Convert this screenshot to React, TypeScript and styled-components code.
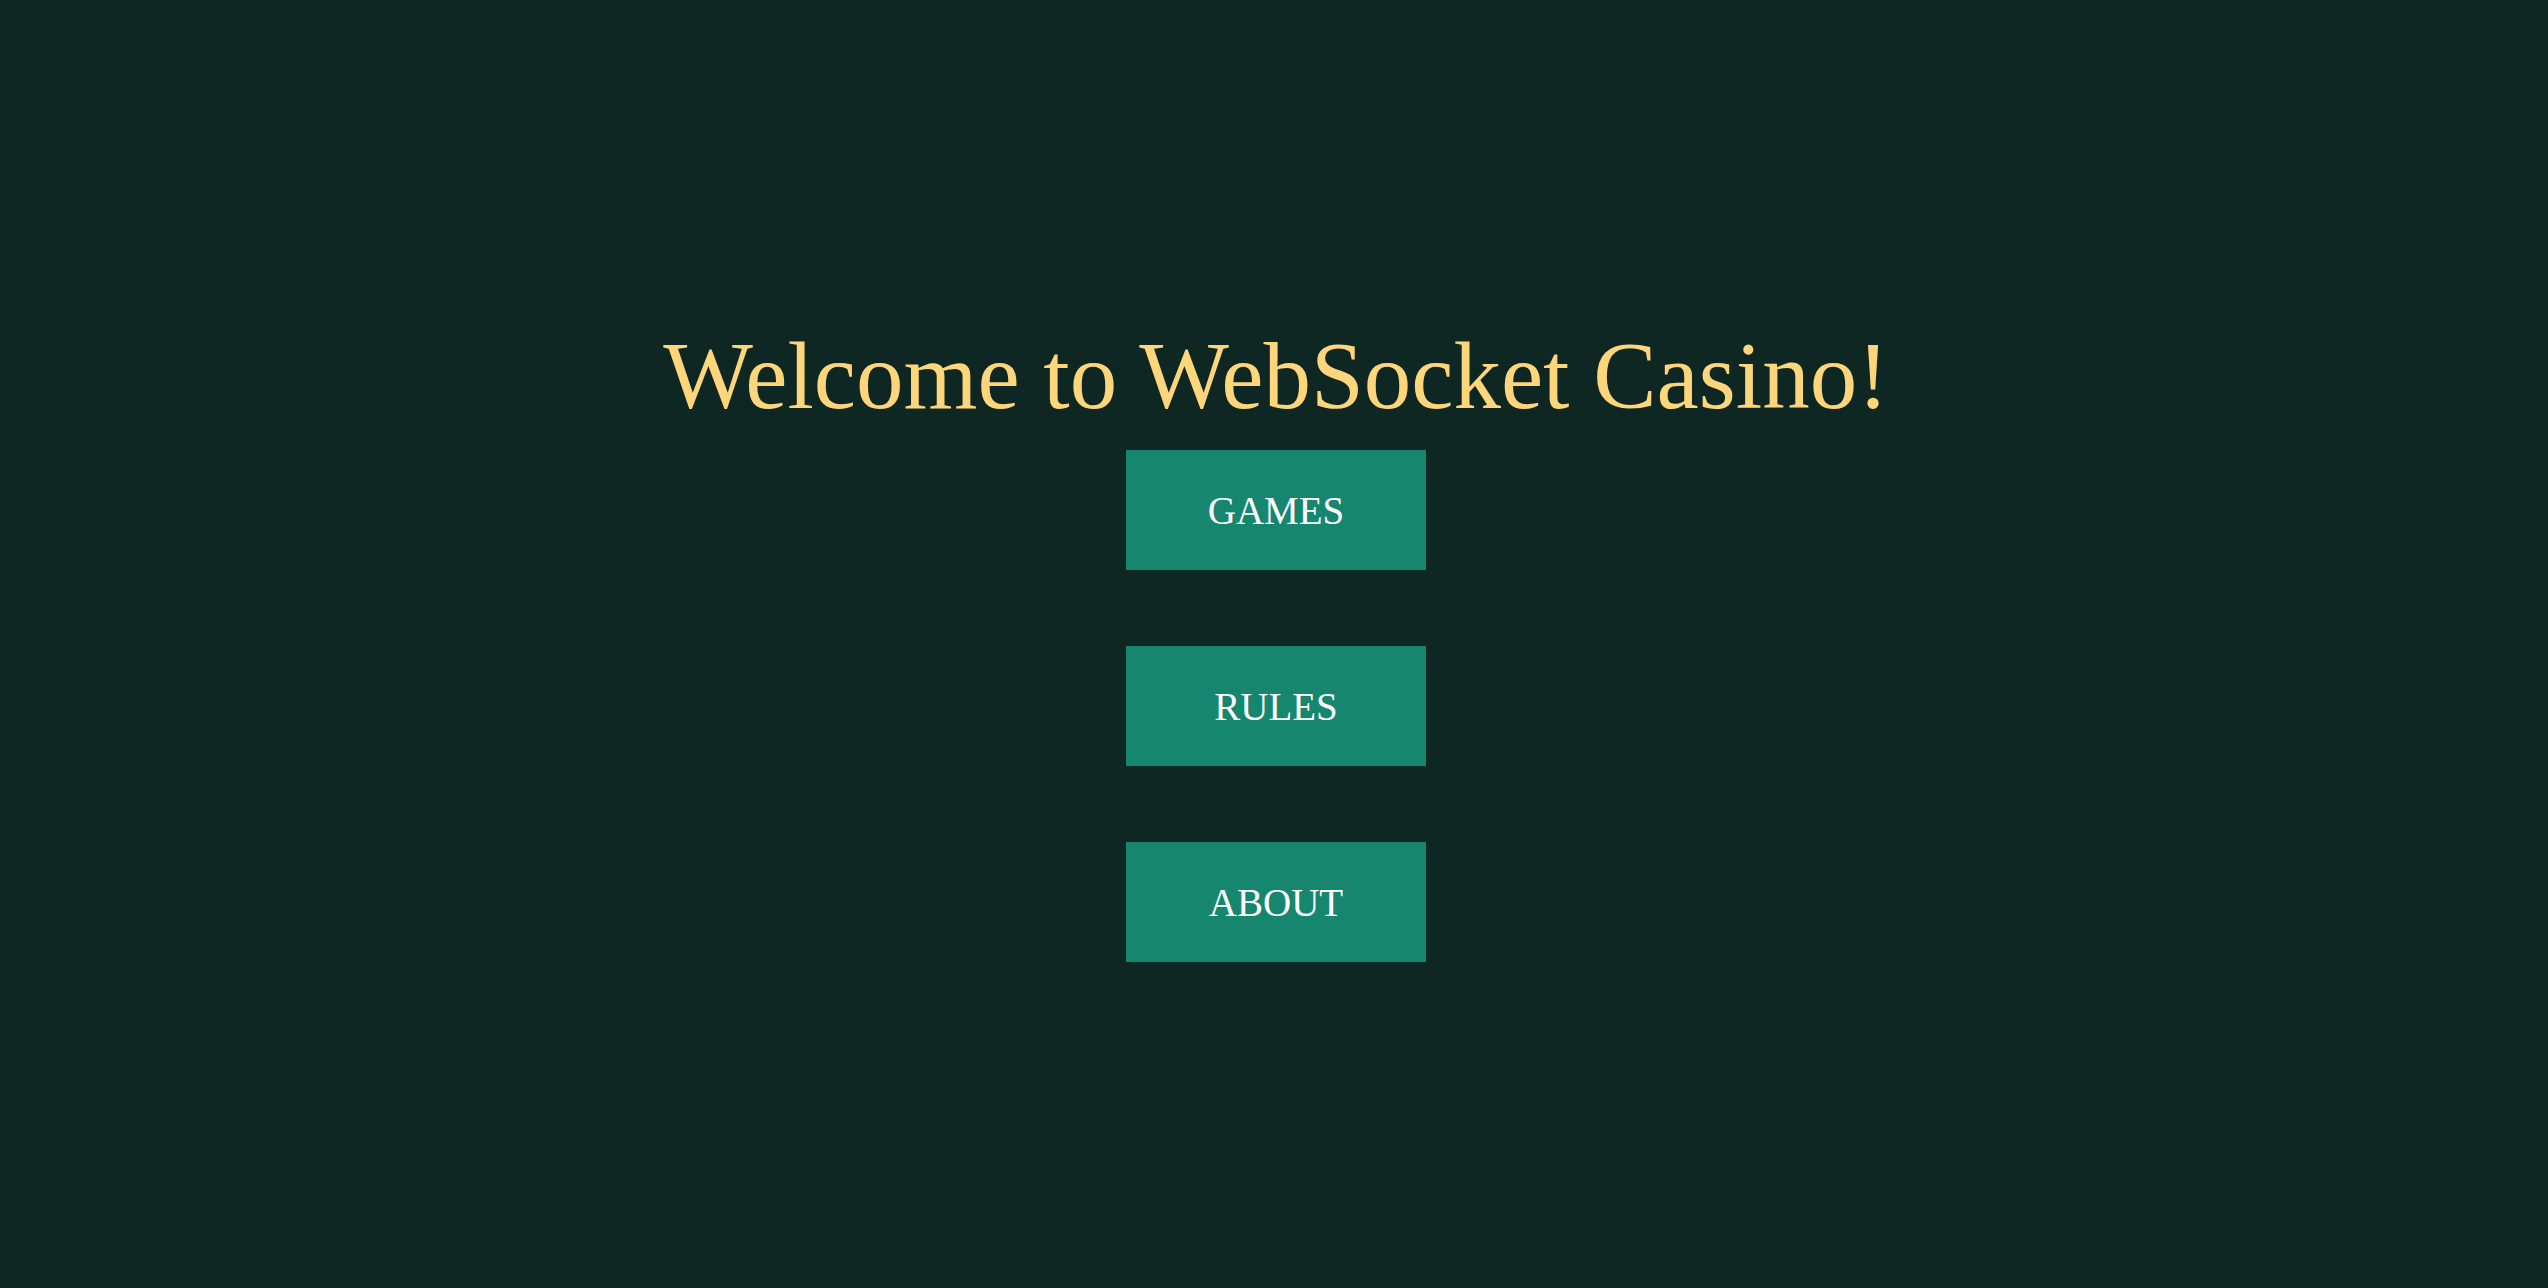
import styled, { createGlobalStyle } from 'styled-components';

const GlobalStyle = createGlobalStyle`
    html, body {
        margin: 0;
        padding: 0;
        background-color: #0f2722;
    }
`;

const Screen = styled.div`
    background-color: #0f2722;
    min-height: 100vh;
    box-sizing: border-box;
    padding: 0 0 5px 4px;
    display: flex;
    flex-direction: column;
    justify-content: center;
    align-items: center;
    font-family: 'Liberation Serif', 'Times New Roman', serif;
`;

const Title = styled.h1`
    font-size: 95px;
    font-weight: normal;
    line-height: 110px;
    color: #fdd67b;
    margin: 0 0 19px 0;
`;

const Menu = styled.nav`
    display: flex;
    flex-direction: column;
    align-items: center;
    gap: 76px;
`;

const MenuButton = styled.a`
    width: 300px;
    height: 120px;
    display: flex;
    justify-content: center;
    align-items: center;
    background-color: #17866f;
    color: #ffffff;
    font-size: 39px;
    text-decoration: none;
    cursor: pointer;

    &:hover {
        background-color: #1a9479;
    }
`;

const items = ['GAMES', 'RULES', 'ABOUT'];

export default function App() {
    return (
        <>
            <GlobalStyle />
            <Screen>
                <Title>Welcome to WebSocket Casino!</Title>
                <Menu>
                    {items.map((label) => (
                        <MenuButton key={label} href={'#' + label.toLowerCase()}>
                            {label}
                        </MenuButton>
                    ))}
                </Menu>
            </Screen>
        </>
    );
}
